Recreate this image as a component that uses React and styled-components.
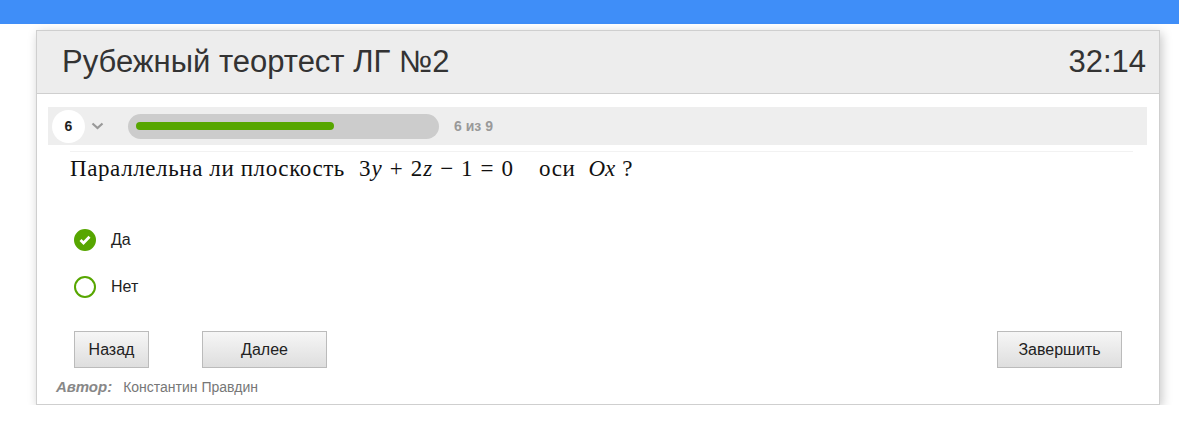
import styled, { createGlobalStyle } from "styled-components";

const GlobalStyle = createGlobalStyle`
  body {
    margin: 0;
    background: #fff;
    font-family: "Liberation Sans", Arial, sans-serif;
  }
`;

const TopBar = styled.div`
  height: 24px;
  background: #3f8ef8;
`;

const Page = styled.div`
  padding: 6px 0 0 36px;
`;

const Card = styled.div`
  width: 1122px;
  height: 373px;
  border: 1px solid #cfcfcf;
  background: #fff;
  box-shadow: 2px 3px 10px rgba(0, 0, 0, 0.22);
  display: flex;
  flex-direction: column;
`;

const Header = styled.div`
  height: 62px;
  background: #ededed;
  border-bottom: 1px solid #cfcfcf;
  display: flex;
  align-items: center;
  justify-content: space-between;
  padding: 0 13px 0 25px;
  color: #333;
  font-size: 31px;
`;

const Body = styled.div`
  padding: 13px 12px 0 11px;
  display: flex;
  flex-direction: column;
  flex: 1;
`;

const ProgressRow = styled.div`
  height: 38px;
  background: #eeeeee;
  display: flex;
  align-items: center;
  padding-left: 4px;
`;

const NumCircle = styled.div`
  width: 33px;
  height: 33px;
  border-radius: 50%;
  background: #fff;
  display: flex;
  align-items: center;
  justify-content: center;
  font-size: 14px;
  font-weight: bold;
  color: #222;
`;

const Chevron = styled.div`
  width: 20px;
  margin-left: 6px;
  display: flex;
  align-items: center;
`;

const Track = styled.div`
  width: 311px;
  height: 25px;
  border-radius: 13px;
  background: #cccccc;
  margin-left: 17px;
  display: flex;
  align-items: center;
  padding-left: 8px;
  box-sizing: border-box;
`;

const Fill = styled.div`
  height: 8px;
  border-radius: 4px;
  background: #57a600;
`;

const Counter = styled.div`
  margin-left: 15px;
  font-size: 14px;
  font-weight: bold;
  color: #999;
`;

const Question = styled.div`
  margin: 6px 14px 0 22px;
  border-top: 1px solid #f2f2f2;
  padding-top: 4px;
  font-family: "Liberation Serif", "Times New Roman", serif;
  font-size: 23px;
  letter-spacing: 0.6px;
  color: #111;
  height: 39px;
  display: flex;
  align-items: baseline;
`;

const Math = styled.span`
  margin: 0 ${(p) => p.right}px 0 ${(p) => p.left}px;
  letter-spacing: 0;
  display: flex;
  align-items: baseline;
`;

const Op = styled.span`
  margin: 0 8px;
`;

const Var = styled.i`
  font-family: "Liberation Serif", serif;
  margin-left: 1px;
`;

const Options = styled.div`
  display: flex;
  flex-direction: column;
  gap: 25px;
  margin: 34px 0 0 26px;
`;

const Option = styled.label`
  display: flex;
  align-items: center;
  gap: 15px;
  font-size: 16px;
  color: #222;
`;

const Radio = styled.span`
  width: 22px;
  height: 22px;
  border-radius: 50%;
  box-sizing: border-box;
  border: 2px solid #57a600;
  background: ${(p) => (p.checked ? "#57a600" : "#fff")};
  display: flex;
  align-items: center;
  justify-content: center;
`;

const Buttons = styled.div`
  display: flex;
  margin: 33px 25px 0 26px;
  gap: 53px;
`;

const Button = styled.button`
  width: ${(p) => p.w}px;
  height: 37px;
  border: 1px solid #bbb;
  background: linear-gradient(#f6f6f6, #dedede);
  font-family: "Liberation Sans", Arial, sans-serif;
  font-size: 16px;
  color: #222;
  margin-left: ${(p) => (p.push ? "auto" : "0")};
`;

const Author = styled.div`
  margin: 10px 0 0 8px;
  font-size: 14px;
  color: #777;
  display: flex;
  align-items: baseline;
  gap: 11px;
`;

const AuthorLabel = styled.span`
  font-weight: bold;
  font-style: italic;
  font-size: 15px;
  color: #888;
`;

function App() {
  const current = 6;
  const total = 9;
  return (
    <>
      <GlobalStyle />
      <TopBar />
      <Page>
        <Card>
          <Header>
            <span>Рубежный теортест ЛГ №2</span>
            <span>32:14</span>
          </Header>
          <Body>
            <ProgressRow>
              <NumCircle>{current}</NumCircle>
              <Chevron>
                <svg width="13" height="8" viewBox="0 0 13 8">
                  <path d="M1.5 1.5 L6.5 6 L11.5 1.5" fill="none" stroke="#999" strokeWidth="2.2" />
                </svg>
              </Chevron>
              <Track>
                <Fill style={{ width: 198 }} />
              </Track>
              <Counter>
                {current} из {total}
              </Counter>
            </ProgressRow>
            <Question>
              Параллельна ли плоскость
              <Math left={14} right={26}>
                3<Var>y</Var>
                <Op>+</Op>2<Var>z</Var>
                <Op>−</Op>1<Op>=</Op>0
              </Math>
              оси
              <Math left={12} right={7}>
                <Var>Ox</Var>
              </Math>
              ?
            </Question>
            <Options>
              <Option>
                <Radio checked>
                  <svg width="12" height="10" viewBox="0 0 12 10">
                    <path d="M1.5 5 L4.5 8 L10.5 1.8" fill="none" stroke="#fff" strokeWidth="2.8" />
                  </svg>
                </Radio>
                Да
              </Option>
              <Option>
                <Radio />
                Нет
              </Option>
            </Options>
            <Buttons>
              <Button w={75}>Назад</Button>
              <Button w={125}>Далее</Button>
              <Button w={125} push>
                Завершить
              </Button>
            </Buttons>
            <Author>
              <AuthorLabel>Автор:</AuthorLabel>
              <span>Константин Правдин</span>
            </Author>
          </Body>
        </Card>
      </Page>
    </>
  );
}

export default App;
